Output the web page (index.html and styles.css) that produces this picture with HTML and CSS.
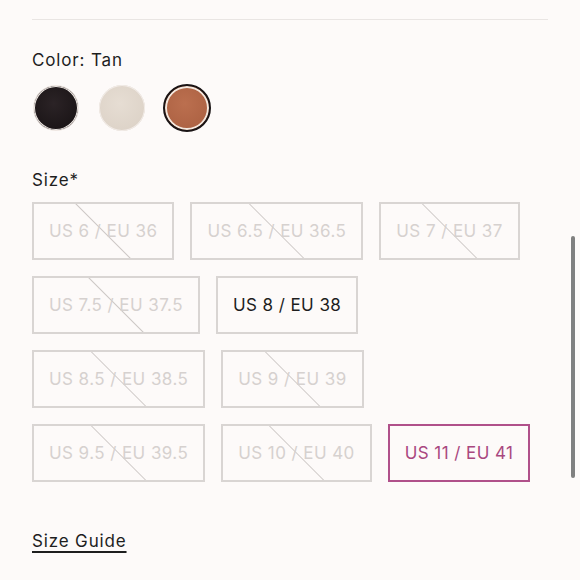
FILE: index.html
```html
<!DOCTYPE html>
<html>
<head>
<meta charset="utf-8">
<link rel="stylesheet" href="styles.css">
</head>
<body>
<div class="page">
  <hr class="rule">
  <div class="field color-field">
    <div class="label">Color: Tan</div>
    <div class="swatches">
      <span class="swatch black"></span>
      <span class="swatch cream"></span>
      <span class="swatch tan selected"></span>
    </div>
  </div>
  <div class="field size-field">
    <div class="label">Size*</div>
    <div class="sizes">
      <span class="size off">US 6 / EU 36</span>
      <span class="size off">US 6.5 / EU 36.5</span>
      <span class="size off">US 7 / EU 37</span>
      <span class="size off">US 7.5 / EU 37.5</span>
      <span class="size">US 8 / EU 38</span>
      <span class="size off">US 8.5 / EU 38.5</span>
      <span class="size off">US 9 / EU 39</span>
      <span class="size off">US 9.5 / EU 39.5</span>
      <span class="size off">US 10 / EU 40</span>
      <span class="size active">US 11 / EU 41</span>
    </div>
  </div>
  <a class="guide" href="#">Size Guide</a>
</div>
<div class="scrollbar"></div>
</body>
</html>
```
FILE: styles.css
```css
html, body {
  margin: 0;
  padding: 0;
  background: #fdfaf9;
}
body {
  font-family: Inter, "Liberation Sans", sans-serif;
  color: #1e1e1e;
  width: 580px;
  height: 580px;
  overflow: hidden;
}
.page {
  padding: 19px 32px 0 32px;
  width: 516px;
}
.rule {
  margin: 0;
  border: 0;
  border-top: 1px solid #e9e5e3;
}
.label {
  font-size: 17px;
  letter-spacing: 0.05em;
  line-height: 20px;
}
.color-field {
  margin-top: 30px;
}
.swatches {
  display: flex;
  gap: 20px;
  margin-top: 14px;
  align-items: center;
  padding-left: 1px;
}
.swatch {
  width: 46px;
  height: 46px;
  border-radius: 50%;
  box-sizing: border-box;
  box-shadow: 0 0 0 1px #f2ece8 inset;
}
.black { background: radial-gradient(circle at 45% 40%, #2b2326, #1c1618 70%); border: 1px solid #efe7e2; }
.cream { background: radial-gradient(circle at 45% 40%, #e6ddd3, #ddd3c8 75%); }
.tan {
  background: radial-gradient(circle at 45% 40%, #bb6f4f, #ad6243 75%);
  width: 48px;
  height: 48px;
  margin-left: -2px;
  border: 2px solid #1a1415;
  box-shadow: 0 0 0 2px #f3e8df inset;
}
.size-field {
  margin-top: 38px;
}
.sizes {
  display: flex;
  flex-wrap: wrap;
  gap: 16px 16px;
  margin-top: 12px;
  width: 505px;
}
.size {
  box-sizing: border-box;
  flex-shrink: 0;
  white-space: nowrap;
  height: 58px;
  display: flex;
  align-items: center;
  padding: 0 15px;
  border: 2px solid #d9d5d3;
  font-size: 17px;
  letter-spacing: 0.025em;
  color: #1e1e1e;
}
.size.off {
  color: #d6d1cf;
  background: linear-gradient(45deg, transparent calc(50% - 1px), #cfcac8 50%, transparent calc(50% + 1px));
}
.size.active {
  border-color: #b0508a;
  color: #a9477f;
}
.guide {
  display: inline-block;
  margin-top: 49px;
  font-size: 17px;
  letter-spacing: 0.05em;
  color: #1e1e1e;
  text-decoration: underline;
  text-decoration-thickness: 2px;
  text-underline-offset: 4px;
}
.scrollbar {
  position: absolute;
  left: 571px;
  top: 236px;
  width: 4px;
  height: 242px;
  border-radius: 2px;
  background: #808080;
}
```
